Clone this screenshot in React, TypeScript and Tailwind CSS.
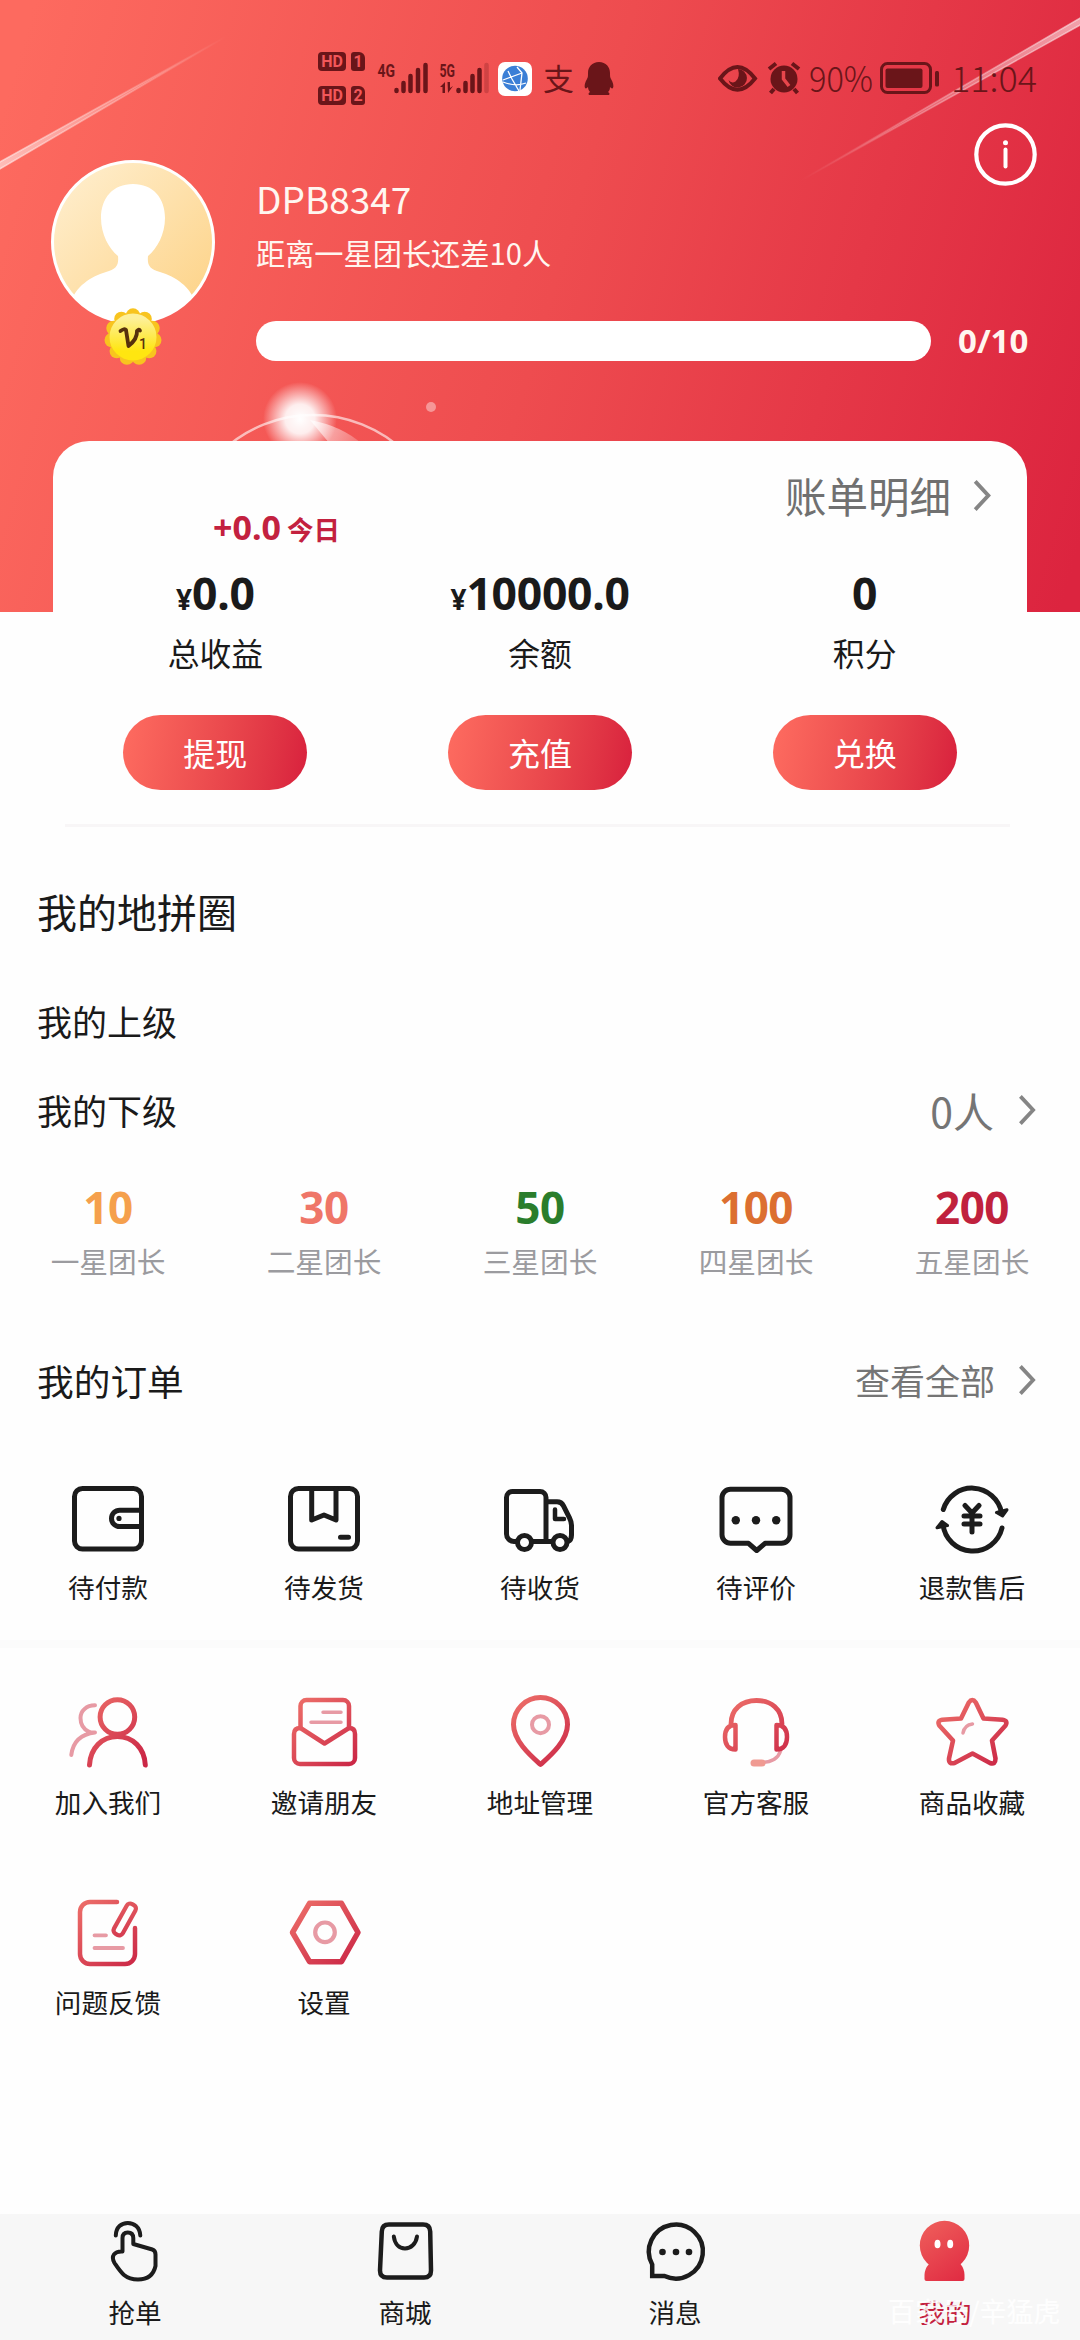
import type { ReactNode } from "react";

const INK = "#1c1c1c";

function Svg({ children, color = INK }: { children: ReactNode; color?: string }) {
  return (
    <svg
      width="84"
      height="84"
      viewBox="0 0 84 84"
      fill="none"
      stroke={color}
      strokeWidth="5"
      strokeLinecap="round"
      strokeLinejoin="round"
    >
      {children}
    </svg>
  );
}

function Chevron({ h = 34 }: { h?: number }) {
  return (
    <svg width="20" height={h} viewBox="0 0 20 34" fill="none" stroke="#858585" strokeWidth="4">
      <path d="M3 2.500 16.500 17 3 31.500" />
    </svg>
  );
}

const RED = "url(#redGrad)";
const PINK = "#e79aa4";

const icons: Record<string, ReactNode> = {
  wallet: (
    <Svg>
      <rect x="8.500" y="12.500" width="67" height="60.500" rx="8" />
      <path d="M75 34.200H53.700a8.200 8.200 0 0 0 0 16.400H75" />
      <circle cx="53" cy="42.400" r="2.600" fill={INK} stroke="none" />
    </Svg>
  ),
  box: (
    <Svg>
      <rect x="8.500" y="12.500" width="67" height="60.500" rx="8" />
      <path d="M29.700 12.500V44L42 39l12 5V12.500M58.500 61.300h8" />
    </Svg>
  ),
  truck: (
    <Svg>
      <path d="M19 65.500h-3a7.500 7.500 0 0 1-7.500-7.500V21.500a6 6 0 0 1 6-6H42a6 6 0 0 1 6 6V65.500H34.500M48 65.500h6M48 25.800h11q4.500 0 6.500 4l6 12q2 4 2 7.500V59q0 5-3.500 6.500" />
      <path d="M57 33.500v9.500h9" strokeWidth="4.500" />
      <circle cx="26.500" cy="66.500" r="7" />
      <circle cx="62" cy="66.500" r="7" />
    </Svg>
  ),
  comment: (
    <Svg>
      <path d="M16.500 13.300h51a8.500 8.500 0 0 1 8.500 8.500v37a8.500 8.500 0 0 1-8.500 8.500H51L42.700 74.500 34.500 67.300h-18A8.500 8.500 0 0 1 8 58.800v-37a8.500 8.500 0 0 1 8.500-8.500Z" />
      <g fill={INK} stroke="none">
        <circle cx="21.800" cy="44.300" r="4.200" />
        <circle cx="42" cy="44.300" r="4.200" />
        <circle cx="62.200" cy="44.300" r="4.200" />
      </g>
    </Svg>
  ),
  refund: (
    <Svg>
      <path d="M13.300 33.500A30 30 0 0 1 71.500 36.500M13 48.500A30 30 0 0 0 72 52" />
      <path d="M66.500 36.500 77 33.800 72.500 40ZM17.500 49.500 7 51.800 12 45.500Z" fill={INK} strokeWidth="3" />
      <path d="M35 29.500 42 37l7-7.500M42 37V56M34 40h16M34 48h16" />
    </Svg>
  ),
  people: (
    <Svg color={RED}>
      <path d="M29 15.300C20.500 15.500 14.500 20.500 14.500 28c0 6 3 11 8 13.500 2 1 4 1.200 6.500 1C16 44 7 51 5.300 65" stroke={PINK} strokeWidth="4" />
      <circle cx="51.400" cy="27" r="17.300" />
      <path d="M23.500 75C24.500 58 36 46.500 51.400 46.500S78.500 58 79.300 75" />
    </Svg>
  ),
  mail: (
    <Svg color={RED}>
      <path d="M18.500 38V16a6 6 0 0 1 6-6H61a6 6 0 0 1 6 6V38" strokeWidth="4.500" />
      <path d="M18.500 38 42.500 53.500 67 38q6 0 6 6V68a6 6 0 0 1-6 6H18a6 6 0 0 1-6-6V44q0-6 6.500-6Z" strokeWidth="4.500" />
      <path d="M41 22.300H59M29 32.300H59" stroke={PINK} strokeWidth="3.500" />
    </Svg>
  ),
  pin: (
    <Svg color={RED}>
      <path d="M42.500 74.500C33 66 15.500 51 15.500 34.500a27 27 0 0 1 54 0C69.500 51 52 66 42.500 74.500Z" />
      <circle cx="42.500" cy="34.700" r="8.500" stroke={PINK} strokeWidth="4" />
    </Svg>
  ),
  headset: (
    <Svg color={RED}>
      <path d="M66.500 61C64 69 58 72 48 72.500" stroke={PINK} strokeWidth="3.500" />
      <path d="M40 73h8" stroke="#f09a92" strokeWidth="7" />
      <path d="M17 34C17 19 28 10.500 42.500 10.500S68 19 68 34" strokeWidth="4.800" />
      <path d="M21.500 35v24.500C14 59.500 11 54 11 47s3-12 10.500-12ZM62.500 35v24.500C70 59.500 73 54 73 47s-3-12-10.500-12Z" strokeWidth="4.500" />
    </Svg>
  ),
  star: (
    <Svg color={RED}>
      <path
        d="M38.800 12.500q3.500-5 7 0L53.500 28.500 72.500 29.800q6 1 2.800 6L62 50.500 65.500 68.500q0 6.500-5.500 4.500L42.500 63.500 24.500 73q-6 1.500-5.500-4.500L23 50.500 9.500 35.800q-3-5 2.800-6L31 28.500Z"
        strokeWidth="4.600"
      />
      <path d="M33 43q1.500-8 9.500-9" stroke={PINK} strokeWidth="3.500" />
    </Svg>
  ),
  feedback: (
    <Svg color={RED}>
      <path d="M51 12H24a10 10 0 0 0-10 10V64a10 10 0 0 0 10 10H59a10 10 0 0 0 10-10V38" strokeWidth="4.500" />
      <rect x="54" y="12.500" width="10" height="34" rx="4" transform="rotate(29 59 29)" strokeWidth="4.200" />
      <path d="M28.500 45.300H40M28.500 58H57" stroke={PINK} strokeWidth="3.800" />
    </Svg>
  ),
  settings: (
    <Svg color={RED}>
      <path d="M27.500 13.300H59.500L76 42.500 59.500 71.700H27.500L10.500 42.500Z" strokeWidth="5.500" />
      <circle cx="43" cy="42.300" r="9.800" stroke={PINK} strokeWidth="4.200" />
    </Svg>
  ),
  tap: (
    <Svg>
      <path d="M22.800 26.500C23 18 28.500 14 34.800 14s12 4 12.500 12.500" strokeWidth="4" />
      <path
        d="M29.500 42.500V29q0-5.500 5.300-5.500T40.300 29v6l19 5.500q3.200 1 3.200 5V57c-2 9-8 13.500-17.500 13.500-13 0-17.500-7.500-23.500-16.500-4-7 0-12 8-11.500Z"
        strokeWidth="4"
      />
    </Svg>
  ),
  bag: (
    <Svg>
      <path d="M26 15.500H60q7 0 7.200 7L68 61.500q0 7-7 7H24q-7 0-7-7L18.800 22.500q.200-7 7.200-7Z" strokeWidth="4.500" />
      <path d="M30.800 27.500c1 7.500 5.500 12 11.200 12s11-4.500 12-12" strokeWidth="4" />
    </Svg>
  ),
  message: (
    <Svg>
      <path d="M19.200 67V55.500A27 27 0 1 1 31.500 67Z" strokeWidth="4.500" strokeLinejoin="miter" />
      <g fill={INK} stroke="none">
        <circle cx="29.500" cy="43" r="3.300" />
        <circle cx="43" cy="43" r="3.300" />
        <circle cx="56" cy="43" r="3.300" />
      </g>
    </Svg>
  ),
  me: (
    <Svg>
      <g stroke="none" fill="url(#meGrad)">
        <circle cx="41.500" cy="36.500" r="24.700" />
        <path d="M26 55H57.500Q61.500 60 61.500 66v4q0 2-2 2H23.500q-2 0-2-2V66q0-6 4.500-11Z" />
      </g>
      <g stroke="none" fill="#fff">
        <ellipse cx="34.500" cy="35" rx="3" ry="4.300" />
        <ellipse cx="47.200" cy="35" rx="3" ry="4.300" />
      </g>
    </Svg>
  ),
};

function IconCell({ icon, label, cls }: { icon: string; label: string; cls: string }) {
  return (
    <div className="flex flex-col items-center">
      {icons[icon]}
      <span className={cls}>{label}</span>
    </div>
  );
}

const levels = [
  { n: "10", t: "一星团长", c: "text-[#f5a04c]" },
  { n: "30", t: "二星团长", c: "text-[#ef7668]" },
  { n: "50", t: "三星团长", c: "text-[#2a7d2c]" },
  { n: "100", t: "四星团长", c: "text-[#dc6f30]" },
  { n: "200", t: "五星团长", c: "text-[#c0213d]" },
];

const orders = [
  ["wallet", "待付款"],
  ["box", "待发货"],
  ["truck", "待收货"],
  ["comment", "待评价"],
  ["refund", "退款售后"],
];

const tools = [
  ["people", "加入我们"],
  ["mail", "邀请朋友"],
  ["pin", "地址管理"],
  ["headset", "官方客服"],
  ["star", "商品收藏"],
];

const tools2 = [
  ["feedback", "问题反馈"],
  ["settings", "设置"],
];

const nav = [
  ["tap", "抢单"],
  ["bag", "商城"],
  ["message", "消息"],
  ["me", "我的"],
];

const stats = [
  { y: "¥", v: "0.0", l: "总收益", b: "提现" },
  { y: "¥", v: "10000.0", l: "余额", b: "充值" },
  { y: "", v: "0", l: "积分", b: "兑换" },
];

function HeaderArt() {
  return (
    <svg className="absolute left-0 top-0" width="1080" height="612" viewBox="0 0 1080 612" fill="none">
      <defs>
        <linearGradient id="bgGrad" gradientUnits="userSpaceOnUse" x1="0" y1="120" x2="1110" y2="440">
          <stop offset="0" stopColor="#fd6a5f" />
          <stop offset="0.500" stopColor="#ee4c4f" />
          <stop offset="1" stopColor="#dc243f" />
        </linearGradient>
        <linearGradient id="streakL" gradientUnits="userSpaceOnUse" x1="0" y1="165" x2="227" y2="37">
          <stop offset="0" stopColor="#fff" stopOpacity="0.550" />
          <stop offset="1" stopColor="#fff" stopOpacity="0" />
        </linearGradient>
        <linearGradient id="streakR" gradientUnits="userSpaceOnUse" x1="1080" y1="20" x2="800" y2="181">
          <stop offset="0" stopColor="#fff" stopOpacity="0.550" />
          <stop offset="1" stopColor="#fff" stopOpacity="0" />
        </linearGradient>
        <radialGradient id="glow">
          <stop offset="0" stopColor="#fff" />
          <stop offset="0.400" stopColor="#fff" stopOpacity="0.900" />
          <stop offset="1" stopColor="#fff" stopOpacity="0" />
        </radialGradient>
        <linearGradient id="flare" gradientUnits="userSpaceOnUse" x1="310" y1="420" x2="362" y2="446">
          <stop offset="0" stopColor="#fff" stopOpacity="0.700" />
          <stop offset="1" stopColor="#fff" stopOpacity="0.150" />
        </linearGradient>
      </defs>
      <rect width="1080" height="612" fill="url(#bgGrad)" />
      <path d="M-2 163 227 36 -2 170Z" fill="url(#streakL)" stroke="url(#streakL)" strokeWidth="1.500" />
      <path d="M1082 17 800 181 1082 24Z" fill="url(#streakR)" stroke="url(#streakR)" strokeWidth="1.500" />
      <circle cx="313" cy="548" r="133" stroke="#fff" strokeOpacity="0.600" strokeWidth="2.500" />
      <path d="M310 420q32 6 52 24H330Z" fill="url(#flare)" />
      <circle cx="300" cy="419" r="37" fill="url(#glow)" />
      <circle cx="431" cy="407" r="5" fill="#fff" fillOpacity="0.400" />
    </svg>
  );
}

const DARK = "#6a1519";

function StatusBar() {
  return (
    <div className="relative flex h-[110px] pl-[318px] text-[#6a1519]">
      <div className="mt-[52px] flex w-[59px] flex-col gap-[15px]">
        {["1", "2"].map((n) => (
          <div key={n} className="flex h-[19px] gap-[5px] text-[16px] font-bold leading-[19px] text-[#f2575a] [font-family:Roboto]">
            <span className="w-[28px] rounded-[4px] bg-[#6a1519] text-center">HD</span>
            <span className="w-[14px] rounded-[3px] rounded-tr-[6px] bg-[#6a1519] text-center">{n}</span>
          </div>
        ))}
      </div>
      <svg className="mt-[50px]" width="240" height="50" viewBox="377 50 240 50" fill={DARK}>
        <text x="377.500" y="77" fontSize="18.500" fontWeight="700" fontFamily="Roboto" textLength="17.500" lengthAdjust="spacingAndGlyphs">4G</text>
        <text x="439.500" y="77" fontSize="18.500" fontWeight="700" fontFamily="Roboto" textLength="15.500" lengthAdjust="spacingAndGlyphs">5G</text>
        <g stroke={DARK} strokeWidth="4.500" strokeLinecap="round">
          <path d="M396.500 90V91M403.500 83V91M410.500 76V91M418 70V91M425.500 65V91M458.500 90V91M465.500 83V91M472.500 76V91M479.500 70V91" />
          <path d="M486.500 65V91" strokeOpacity="0.250" />
        </g>
        <path d="M440 87 445 82V93H442.500V87ZM447.500 82H450V88L453 86 448 93Z" />
        <rect x="498" y="62" width="34" height="34" rx="7" fill="#fff" />
        <circle cx="515" cy="78.500" r="12.800" fill="#3b7fd6" />
        <path d="M503 80 522 73M503 82Q516 87 526 83M517 67 522 73 520 90M508 71 512 79 519 91" fill="none" stroke="#fff" strokeWidth="1.300" />
        <text x="543" y="90" fontSize="30" textLength="31" lengthAdjust="spacingAndGlyphs">支</text>
        <path d="M599 62c7 0 11 5 11 11 0 3 0 4 1 6 2 3 3 7 2 9-1 1-2 0-3-1 0 3-1 4-2 5 2 1 2 3 0 3H590c-2 0-2-2 0-3-1-1-2-3-2-5-1 1-2 2-3 1-1-2 0-6 2-9 1-2 1-3 1-6 0-6 4-11 11-11Z" />
      </svg>
      <svg className="mt-[50px] ml-[101px]" width="324" height="56" viewBox="718 50 324 56" fill={DARK}>
        <path d="M720 78.500Q737.500 55.500 755 78.500 737.500 101 720 78.500Z" fill="none" stroke={DARK} strokeWidth="4" />
        <path d="M738 69a9.300 9.300 0 1 1-9.500 11q3 4 7 1.500 5-4 2.500-12.500Z" />
        <circle cx="784" cy="79" r="13.500" />
        <path d="M769 69 776 63.500M799 69 792 63.500M774 89 770.500 93M794 89 797.500 93" stroke={DARK} strokeWidth="4" />
        <path d="M783.500 71V79L789 86" stroke="#e8464c" strokeWidth="3.500" fill="none" />
        <text x="809" y="92" fontSize="35" fontWeight="300" textLength="64" lengthAdjust="spacingAndGlyphs">90%</text>
        <rect x="881.500" y="63.500" width="49" height="29" rx="6" fill="none" stroke={DARK} strokeWidth="3" />
        <rect x="885.500" y="68.500" width="37" height="19.500" rx="2" />
        <rect x="935" y="71" width="4" height="15.500" rx="1.500" />
        <text x="951" y="92" fontSize="35" fontWeight="300" textLength="86" lengthAdjust="spacingAndGlyphs">11:04</text>
      </svg>
    </div>
  );
}

function Avatar() {
  return (
    <svg className="absolute left-[50px] top-[159px]" width="166" height="210" viewBox="50 159 166 210">
      <defs>
        <linearGradient id="av" x1="0" y1="0" x2="1" y2="1">
          <stop offset="0" stopColor="#fff0d2" />
          <stop offset="1" stopColor="#fdd183" />
        </linearGradient>
        <clipPath id="avc">
          <circle cx="133" cy="242" r="80" />
        </clipPath>
        <linearGradient id="badge" x1="0" y1="0" x2="0" y2="1">
          <stop offset="0.100" stopColor="#fdf09a" />
          <stop offset="0.800" stopColor="#ffe610" />
        </linearGradient>
      </defs>
      <circle cx="133" cy="242" r="80.500" fill="url(#av)" stroke="#fff" strokeWidth="3" />
      <g clipPath="url(#avc)" fill="#fff">
        <path d="M133 184c20 0 32 14 32 34 0 16-8 31-17 38-1 10 2 13 12 16 16 5 30 14 36 32v30H70v-30c6-18 20-27 36-32 10-3 13-6 12-16-9-7-17-22-17-38 0-20 12-34 32-34Z" />
      </g>
      <g fill="#f8c41f">
        {Array.from({ length: 11 }, (_, i) => {
          const a = (i / 11) * Math.PI * 2 - Math.PI / 2;
          return <circle key={i} cx={133 + 21.5 * Math.cos(a)} cy={337 + 21.5 * Math.sin(a)} r="7.200" />;
        })}
      </g>
      <circle cx="133" cy="337" r="23.500" fill="url(#badge)" />
      <path d="M120.500 331q4-3 5.500-1l2.500 16q9-7 8.500-15 2-2.500 3-.500" fill="none" stroke="#56300c" strokeWidth="3.800" strokeLinecap="round" strokeLinejoin="round" />
      <text x="139" y="349" fontSize="14" fontWeight="500" fill="#56300c" fontFamily="Roboto">1</text>
    </svg>
  );
}

export default function App() {
  const orderLabel = "mt-[10px] text-[26.600px] leading-[34px] text-[#1a1a1a]";
  const toolLabel = "mt-[11px] text-[26.600px] leading-[34px] text-[#1a1a1a]";
  return (
    <div
      className="relative flex h-[2340px] w-[1080px] flex-col overflow-hidden bg-[#fefefe] text-[#1a1a1a]"
      style={{ fontFamily: '"Noto Sans CJK SC", "Noto Sans", sans-serif' }}
    >
      <svg className="absolute" width="0" height="0">
        <defs>
          <linearGradient id="redGrad" gradientUnits="userSpaceOnUse" x1="12" y1="8" x2="70" y2="76">
            <stop offset="0" stopColor="#ee716a" />
            <stop offset="1" stopColor="#cb2746" />
          </linearGradient>
          <linearGradient id="meGrad" gradientUnits="userSpaceOnUse" x1="20" y1="12" x2="62" y2="72">
            <stop offset="0" stopColor="#ef5f5b" />
            <stop offset="1" stopColor="#e02a42" />
          </linearGradient>
        </defs>
      </svg>

      <header className="relative h-[612px] shrink-0">
        <HeaderArt />
        <StatusBar />
        <Avatar />
        <svg className="absolute left-[974px] top-[123px]" width="63" height="63" viewBox="0 0 63 63" fill="none" stroke="#fff">
          <circle cx="31.500" cy="31.500" r="29.200" strokeWidth="4.200" />
          <path d="M31.500 26.500V43.500" strokeWidth="4" strokeLinecap="round" />
          <circle cx="31.500" cy="19.800" r="2.500" fill="#fff" stroke="none" />
        </svg>
        <div className="relative ml-[256px] mt-[63px] flex flex-col text-[#fff6f0]">
          <span className="h-[50px] text-[37px] leading-[50px]">DPB8347</span>
          <span className="mt-[9px] h-[40px] text-[29.200px] leading-[40px]">距离一星团长还差10人</span>
          <div className="mt-[49px] flex h-[40px] items-center">
            <div className="h-[40px] w-[675px] rounded-full bg-white" />
            <span className="ml-[27px] text-[33px] font-bold leading-[40px] [font-family:'Noto_Sans']">0/10</span>
          </div>
        </div>
      </header>

      <section className="relative mx-[53px] -mt-[171px] h-[384px] shrink-0 rounded-[36px] bg-[#fefefe]">
        <div className="flex h-[72px] justify-end pr-[35px] pt-[20px] text-[41.500px] leading-[68px] text-[#707070]">
          <span>账单明细</span>
          <span className="ml-[21px] flex h-[68px] items-center">
            <Chevron h={33} />
          </span>
        </div>
        <div className="flex h-[30px] items-baseline pl-[160px] font-bold leading-[30px] text-[#c3213f]">
          <span className="text-[34px] leading-[28px] [font-family:'Noto_Sans']">+0.0</span>
          <span className="ml-[6px] text-[26.500px]">今日</span>
        </div>
        <div className="grid grid-cols-3 pt-[20px]">
          {stats.map((s) => (
            <div key={s.l} className="flex flex-col items-center">
              <div className="h-[60px] font-bold leading-[60px] [font-family:'Noto_Sans']">
                <span className="text-[28px]">{s.y}</span>
                <span className="text-[44.500px] tracking-[-0.300px]">{s.v}</span>
              </div>
              <div className="mt-[5px] h-[48px] text-[31.800px] leading-[48px]">{s.l}</div>
              <button className="mt-[39px] h-[75px] w-[184px] rounded-full bg-linear-100 from-[#fe6c60] to-[#d81f3d] text-[32px] leading-[75px] text-white">
                {s.b}
              </button>
            </div>
          ))}
        </div>
        <div className="absolute bottom-[-2px] left-[12px] h-[3px] w-[945px] bg-[#f8f6f7]" />
      </section>

      <section className="flex shrink-0 flex-col pl-[37px] pr-[43px]">
        <h2 className="mt-[56px] h-[60px] text-[40px] leading-[60px]">我的地拼圈</h2>
        <div className="mt-[55px] h-[50px] text-[35px] leading-[50px]">我的上级</div>
        <div className="mt-[39px] flex h-[50px] items-center text-[35px] leading-[50px]">
          <span>我的下级</span>
          <span className="ml-auto text-[41px] text-[#757575]">0人</span>
          <span className="ml-[23px] flex">
            <Chevron h={32} />
          </span>
        </div>
      </section>

      <section className="mt-[42px] grid shrink-0 grid-cols-5 text-center">
        {levels.map((l) => (
          <div key={l.t}>
            <div className={`h-[60px] text-[44px] font-bold leading-[60px] tracking-[-0.500px] [font-family:'Noto_Sans'] ${l.c}`}>{l.n}</div>
            <div className="mt-[2px] h-[44px] text-[28.700px] leading-[44px] text-[#9b9b9f]">{l.t}</div>
          </div>
        ))}
      </section>

      <section className="mt-[72px] flex h-[50px] shrink-0 items-center pl-[37px] pr-[43px] leading-[50px]">
        <span className="text-[36.700px]">我的订单</span>
        <span className="ml-auto text-[35px] text-[#757575]">查看全部</span>
        <span className="ml-[22px] flex">
          <Chevron h={32} />
        </span>
      </section>

      <section className="mt-[71px] grid h-[164px] shrink-0 grid-cols-5">
        {orders.map(([i, t]) => (
          <IconCell key={t} icon={i} label={t} cls={orderLabel} />
        ))}
      </section>
      <div className="h-[8px] shrink-0 bg-[#fbfbfb]" />
      <section className="mt-[42px] grid h-[200px] shrink-0 grid-cols-5">
        {tools.map(([i, t]) => (
          <IconCell key={t} icon={i} label={t} cls={toolLabel} />
        ))}
      </section>
      <section className="grid h-[324px] shrink-0 grid-cols-5">
        {tools2.map(([i, t]) => (
          <IconCell key={t} icon={i} label={t} cls={toolLabel} />
        ))}
      </section>

      <nav className="relative grid grow grid-cols-4 bg-[#f7f7f7]">
        {nav.map(([i, t]) => (
          <div key={t} className="-mt-[5px]">
            <IconCell
              icon={i}
              label={t}
              cls={
                t === "我的"
                  ? "mt-[2px] text-[26.600px] leading-[34px] text-[#c3213f]"
                  : "mt-[2px] text-[26.600px] leading-[34px] text-[#1a1a1a]"
              }
            />
          </div>
        ))}
        <span className="absolute left-[888px] top-[80px] whitespace-nowrap text-[27px] leading-[34px] text-white/85">
          百家号/辛猛虎
        </span>
      </nav>
    </div>
  );
}
